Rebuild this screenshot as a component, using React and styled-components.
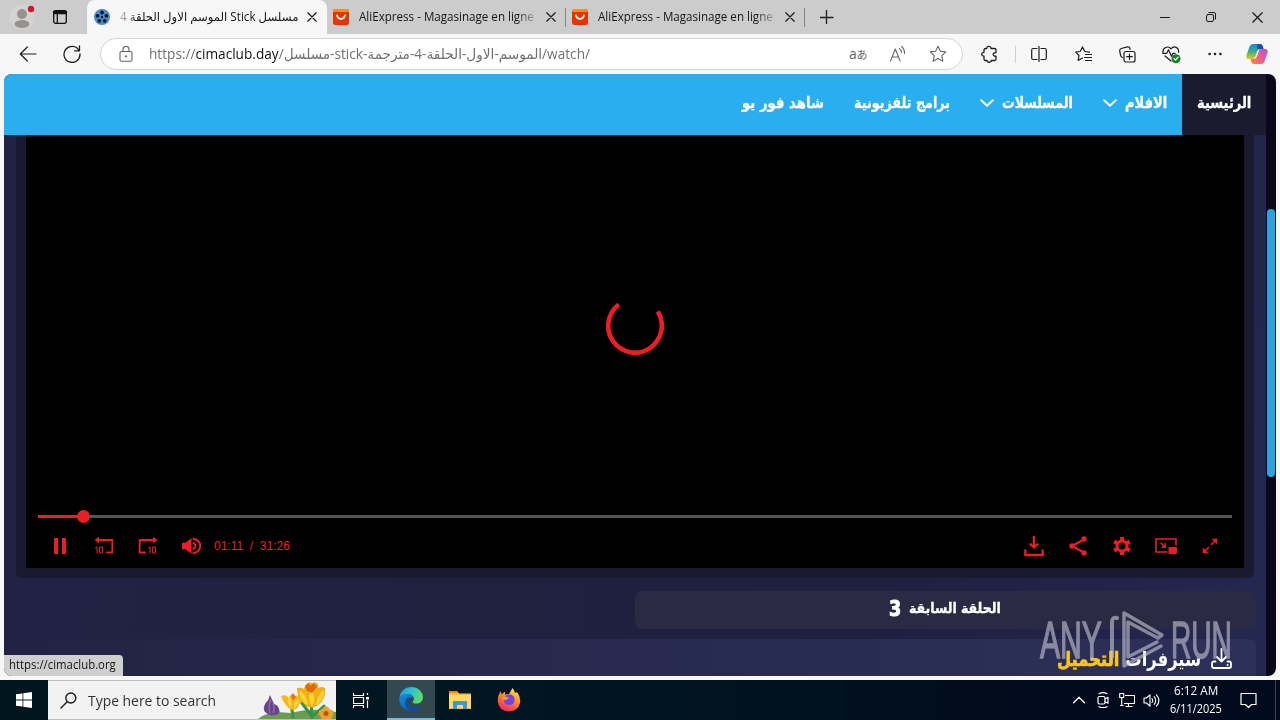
import React, { useLayoutEffect, useRef, useState } from 'react';
import styled, { createGlobalStyle } from 'styled-components';

const Global = createGlobalStyle`
  * { box-sizing: border-box; }
  body { margin: 0; overflow: hidden; font-family: "Open Sans", "DejaVu Sans", sans-serif; }
`;

const RED = '#ee1c25';

const Screen = styled.div`
  width: 1280px;
  height: 720px;
  display: flex;
  flex-direction: column;
  overflow: hidden;
  background: #f7f7f7;
  position: relative;
`;

const Slot = styled.span`
  display: block;
  flex: none;
  width: ${(p) => p.$w}px;
  white-space: nowrap;
  direction: ltr;
  text-align: left;
`;
const Run = styled.span`
  display: inline-block;
  white-space: pre;
  transform-origin: 0 50%;
`;

/* Text squeezed or stretched to a known width. */
function Fit({ w, rtl, className, children }) {
  const ref = useRef(null);
  const [k, setK] = useState(1);
  useLayoutEffect(() => {
    if (ref.current.offsetWidth) setK(w / ref.current.offsetWidth);
  }, [w]);
  return (
    <Slot $w={w} className={className}>
      <Run ref={ref} dir={rtl ? 'rtl' : 'ltr'} style={{ transform: `scaleX(${k})` }}>{children}</Run>
    </Slot>
  );
}

const Svg = styled.svg`
  display: block;
  flex: none;
  width: ${(p) => p.$w || 20}px;
  height: ${(p) => p.$h || p.$w || 20}px;
  fill: none;
  stroke: ${(p) => (p.$s === 0 ? 'none' : p.$c || '#1c1c1c')};
  stroke-width: ${(p) => p.$s || 1.2};
  stroke-linecap: round;
  stroke-linejoin: round;
`;
const Icon = ({ w = 20, h, c, s, children }) => (
  <Svg $w={w} $h={h} $c={c} $s={s} viewBox={`0 0 ${w} ${h || w}`}>{children}</Svg>
);

const Cell = styled.div`
  width: ${(p) => p.$w || 44}px;
  height: 100%;
  flex: none;
  display: flex;
  align-items: center;
  justify-content: center;
`;
const Spacer = styled.div`flex: 1;`;

/* ---------- tab strip ---------- */
const TabStrip = styled.div`
  height: 34px;
  flex: none;
  display: flex;
  align-items: stretch;
  background: #ccc;
`;
const Tab = styled.div`
  width: ${(p) => p.$w}px;
  display: flex;
  align-items: center;
  padding-left: ${(p) => p.$pl}px;
  font-size: 12px;
  color: #151515;
  background: ${(p) => (p.$active ? '#f7f7f7' : 'transparent')};
  border-radius: ${(p) => (p.$active ? '8px 8px 0 0' : '0')};
`;
const TabTitle = styled(Fit)`
  line-height: 20px;
  margin-left: 10px;
  mask-image: linear-gradient(to ${(p) => (p.rtl ? 'left' : 'right')}, #000 ${(p) => (p.rtl ? 90 : 90)}%, rgba(0,0,0,.25) 100%);
`;
const Divider = styled.i`
  width: 1px;
  height: ${(p) => p.$h}px;
  align-self: center;
  background: ${(p) => p.$c};
  flex: none;
`;
const CloseBox = styled.div`
  margin-left: ${(p) => p.$ml}px;
`;
const Close = ({ w = 10 }) => (
  <Icon w={w} s={1.25}><path d={`M.8.8 ${w - 0.8} ${w - 0.8}M${w - 0.8}.8.8 ${w - 0.8}`} /></Icon>
);

const Ali = () => (
  <Icon w={16} s={1.8} c="#fff">
    <rect width="16" height="16" rx="2.5" fill="#e63303" stroke="none" />
    <path d="M0 3V2.500Q0 0 2.500 0H13.500Q16 0 16 2.500V3Z" fill="#f88c1c" stroke="none" />
    <path d="M4 6.300C5 11 11 11 12 6.300" />
  </Icon>
);
const Reel = () => (
  <Icon w={16} s={0}>
    <circle cx="8" cy="8" r="8" fill="#4a8cc8" />
    <g fill="#0b1a30">
      <circle cx="8" cy="8" r="1.200" /><circle cx="8" cy="3.500" r="1.900" /><circle cx="3.600" cy="6.800" r="1.900" />
      <circle cx="12.400" cy="6.800" r="1.900" /><circle cx="5.300" cy="11.800" r="1.900" /><circle cx="10.700" cy="11.800" r="1.900" />
    </g>
  </Icon>
);

function Tabs() {
  return (
    <TabStrip>
      <Cell $w={44}>
        <Icon w={28} s={0}>
          <circle cx="14" cy="14" r="12.500" fill="#d5d3d1" />
          <circle cx="14" cy="11" r="5" fill="#96928f" />
          <ellipse cx="14" cy="21" rx="7.500" ry="4" fill="#96928f" />
          <circle cx="23" cy="6" r="3.200" fill="#d8142b" />
        </Icon>
      </Cell>
      <Cell $w={32}>
        <Icon w={14} s={1.3} c="#111"><rect x=".7" y=".7" width="12.600" height="12.600" rx="2" /><path d="M.7 1.500h12.600v2.200H.7zM4.300 4v9" fill="#111" /></Icon>
      </Cell>
      <Cell $w={11} />
      <Tab $w={240} $pl={7} $active>
        <Reel />
        <TabTitle w={178} rtl>{'مسلسل Stick الموسم الاول الحلقة 4'}</TabTitle>
        <CloseBox $ml={9}><Close /></CloseBox>
      </Tab>
      <Tab $w={238} $pl={6}>
        <Ali /><TabTitle w={175}>AliExpress - Magasinage en ligne</TabTitle>
        <CloseBox $ml={12}><Close /></CloseBox>
      </Tab>
      <Divider $h={19} $c="#858585" />
      <Tab $w={238} $pl={6}>
        <Ali /><TabTitle w={175}>AliExpress - Magasinage en ligne</TabTitle>
        <CloseBox $ml={12}><Close /></CloseBox>
      </Tab>
      <Divider $h={19} $c="#858585" />
      <Cell $w={43}><Icon w={14} s={1.3}><path d="M6.500 .5v13M0 7.500h13" /></Icon></Cell>
      <Spacer />
      <Cell $w={46}><Icon w={10} s={1}><path d="M0 5.500h10" /></Icon></Cell>
      <Cell $w={46}><Icon w={10} s={1}><rect x=".5" y="2.500" width="7" height="7" rx="1.500" /><path d="M2.800.5H8Q9.500.5 9.500 2v5.200" /></Icon></Cell>
      <Cell $w={46}><Close w={11} /></Cell>
    </TabStrip>
  );
}

/* ---------- toolbar ---------- */
const Toolbar = styled.div`
  height: 40px;
  flex: none;
  display: flex;
  align-items: center;
  padding-left: 6px;
`;
const Address = styled.div`
  width: 863px;
  height: 32px;
  margin-left: 7px;
  display: flex;
  align-items: center;
  border: 1px solid #cfd5da;
  border-radius: 16px;
  background: #fff;
  color: #717171;
  font-size: 14px;
  padding-left: 18px;
  b { font-weight: 400; color: #111; }
`;
const Url = styled(Fit)`margin-left: 16px; line-height: 24px;`;
const Glyph = styled.span`
  font: 14px "Open Sans", "Noto Sans CJK JP", sans-serif;
  color: #666;
  letter-spacing: -.5px;
  padding-bottom: 2px;
  small { font-size: 11px; }
`;

function Bar() {
  return (
    <Toolbar>
      <Cell><Icon w={18} s={1.2}><path d="M17 9H1.500M8.300 2 1.300 9l7 7" /></Icon></Cell>
      <Cell $w={43}><Icon w={18} s={1.3}><path d="M16 5.500A8 8 0 1 0 17 9M16.500 1v4.800h-4.800" /></Icon></Cell>
      <Address>
        <Icon w={14} h={16} c="#666" s={1.1}><rect x="1" y="5.500" width="12" height="9.700" rx="1.500" /><path d="M4 5.500V3.500a3 3 0 0 1 6 0v2" /><circle cx="7" cy="10.300" r=".5" fill="#666" /></Icon>
        <Url w={441}>{'https://'}<b>cimaclub.day</b>{'/مسلسل-stick-الموسم-الاول-الحلقة-4-مترجمة/watch/'}</Url>
        <Spacer />
        <Cell $w={40}><Glyph>a<small>あ</small></Glyph></Cell>
        <Cell $w={40}><Icon w={18} c="#666" s={1.1}><path d="M1.500 16 6.300 4l4.800 12M3.200 12h6.300M10.500 3.500q2 1.500 2 4M12.500 1.500q3.200 2.500 3 7" /></Icon></Cell>
        <Cell $w={40}><Icon w={18} c="#666" s={1.1}><path d="m9 1.200 2.400 5 5.400.7-4 3.800 1 5.500L9 13.600l-4.800 2.600 1-5.500-4-3.800 5.400-.7z" /></Icon></Cell>
        <Cell $w={4} />
      </Address>
      <Cell $w={52}><Icon w={18} s={1.3}><path d="M6.800 3.500C6.500 .6 11.300 .6 11 3.500h3.500q1.500 0 1.500 1.500v2.600c-3.700-.7-3.700 4.300 0 3.600V14q0 1.500-1.500 1.500H11.300c.3 2.300-4.600 2.300-4.300 0H5.500Q4 15.500 4 14v-2.800C1 11.200 1 7.300 4 7.300V5q0-1.500 1.500-1.500z" /></Icon></Cell>
      <Divider $h={17} $c="#cfcfcf" />
      <Cell $w={46}><Icon w={16}><path d="M8 .5v15M6 2.500H2.200Q.7 2.500.7 4v8q0 1.500 1.500 1.500H6M10 2.500h3.800q1.500 0 1.500 1.500v8q0 1.500-1.500 1.500H10" /></Icon></Cell>
      <Cell $w={43}><Icon w={17}><path d="M14.500 6.100 9.800 5.500 7.500 1 5.200 5.500.7 6.200l3.300 3.300-.9 5L7.500 12M10.500 8.500h6M9.500 11.500h7M10.500 14.500h6" /></Icon></Cell>
      <Cell><Icon w={17}><rect x="5" y="5.500" width="11" height="10.500" rx="2" /><path d="M10.500 8v5.500M7.700 10.700h5.600M3.500 11.500Q1.800 11 1.500 9.200L.7 4.800Q.6 3 2.200 2.500L8.500.8Q10.500.6 11 2.500v.8" /></Icon></Cell>
      <Cell><Icon w={19}><path d="M1 7.500C.5 3 6 0 9 3.800 12 0 17.500 2.500 16.500 7.500M.7 8.300h4l1.800-3.500 3 6.500 1.600-3h2M3 11l6 5" /><circle cx="14" cy="13.700" r="4.500" fill="#168028" stroke="none" /><path d="m12 13.700 1.500 1.500 2.600-3" stroke="#fff" /></Icon></Cell>
      <Cell><Icon w={14} h={4} s={0}><g fill="#1c1c1c"><circle cx="1.600" cy="2" r="1.300" /><circle cx="7" cy="2" r="1.300" /><circle cx="12.400" cy="2" r="1.300" /></g></Icon></Cell>
      <Cell $w={40}>
        <Icon w={22} s={0}>
          <defs>
            <linearGradient id="ca" x1="0" y1="0" x2="0" y2="1"><stop stopColor="#1688e0" /><stop offset=".5" stopColor="#36b27b" /><stop offset="1" stopColor="#f4c414" /></linearGradient>
            <linearGradient id="cb" x1="1" y1="0" x2="0" y2="1"><stop stopColor="#a952dc" /><stop offset=".5" stopColor="#ef5b90" /><stop offset="1" stopColor="#fb8b38" /></linearGradient>
          </defs>
          <path d="M7 1h7q2 0 2.700 2L17.500 6H14q-2 0-2.700 2L9 14.500Q8.500 16 7 16H3Q-.5 16 .6 12L3.500 3.500Q4.500 1 7 1z" fill="url(#ca)" />
          <path d="M11 1h3q2 0 2.700 2l.8 3H14q-1.500 0-2.300 1z" fill="#1b4bb5" />
          <path d="M15 21H8q-2 0-2.700-2L4.500 16H8q2 0 2.700-2L13 7.500Q13.500 6 15 6h4q3.500 0 2.400 4l-2.900 8.500Q17.500 21 15 21z" fill="url(#cb)" />
        </Icon>
      </Cell>
    </Toolbar>
  );
}

/* ---------- page ---------- */
const Frame = styled.div`
  height: 602px;
  margin: 0 4px 4px;
  flex: none;
  display: flex;
  border-radius: 8px;
  overflow: hidden;
  position: relative;
`;
const Site = styled.div`
  width: 1262px;
  display: flex;
  flex-direction: column;
  background: linear-gradient(100deg, #222247, #20203f 40%, #1f1f40 70%, #242750);
`;
const ScrollTrack = styled.div`
  width: 10px;
  padding: 135px 1px 0;
  background: #090718;
`;
const ScrollThumb = styled.div`
  height: 268px;
  border-radius: 4px;
  background: #29a3e2;
`;
const Nav = styled.nav`
  height: 61px;
  flex: none;
  display: flex;
  direction: rtl;
  background: #29aeef;
  color: #fff;
  font: bold 15.5px "DejaVu Sans", sans-serif;
  -webkit-text-stroke: .3px #fff;
`;
const NavItem = styled.div`
  display: flex;
  align-items: center;
  gap: 8px;
  padding: 0 15px 3px;
  background: ${(p) => (p.$active ? '#1b1b30' : 'transparent')};
`;
const Chevron = () => <Icon w={14} h={8} c="#fff" s={2}><path d="m1.200 1.200 5.800 5.600 5.800-5.600" /></Icon>;

const PlayerShell = styled.section`
  width: 1238px;
  height: 443px;
  margin-left: 12px;
  padding: 0 10px 10px;
  flex: none;
  background: #191a31;
  border-radius: 0 0 6px 6px;
`;
const Player = styled.div`
  height: 433px;
  padding: 0 12px;
  display: flex;
  flex-direction: column;
  background: #000;
`;
const Stage = styled.div`
  height: 374px;
  padding: 6px 2px 0 0;
  display: flex;
  align-items: center;
  justify-content: center;
`;
const Track = styled.div`
  height: 14px;
  display: flex;
  align-items: center;
  i { height: 3px; background: #555; flex: 1; }
  i:first-child { flex: none; width: 40px; background: ${RED}; }
  b { width: 13px; height: 13px; margin: 0 -1px; border-radius: 50%; background: ${RED}; }
`;
const Controls = styled.div`
  height: 45px;
  padding-top: 1px;
  display: flex;
  align-items: center;
`;
const Time = styled.div`color: ${RED}; font: 12px "Liberation Sans", sans-serif;`;

const BelowRow = styled.div`
  height: 38px;
  margin: 13px 10px 0 631px;
  flex: none;
  display: flex;
  align-items: center;
  direction: rtl;
  padding-right: 255px;
  gap: 8px;
  border-radius: 8px;
  background: #2a2a45;
  color: #fff;
  font: bold 14px "DejaVu Sans", sans-serif;
  -webkit-text-stroke: .4px #fff;
  b { font: 900 22px/34px "DejaVu Sans", sans-serif; padding-bottom: 2px; -webkit-text-stroke: 1px #fff; }
`;
const PrevLabel = styled(Fit)`padding-bottom: 4px;`;
const Downloads = styled.div`
  height: 37px;
  margin: 10px 10px 0 8px;
  flex: none;
  display: flex;
  align-items: flex-start;
  direction: rtl;
  padding: 6px 24px 0 0;
  border-radius: 8px 8px 0 0;
  background: linear-gradient(90deg, #222344, #2d3059);
  color: #fff;
  font: bold 20px/28px "DejaVu Sans", sans-serif;
`;
const Servers = styled(Fit)`
  margin-right: 10px;
  em { color: #fcc61a; font-style: normal; -webkit-text-stroke: .7px #fcc61a; }
`;
const DlIcon = styled.div`padding-top: 3px;`;

const StatusTip = styled.div`
  position: absolute;
  left: 0;
  bottom: 0;
  width: 119px;
  height: 21px;
  padding-left: 5px;
  background: #cfcfcf;
  border-radius: 0 4px 0 0;
  color: #151515;
  font-size: 12px;
  line-height: 20px;
`;
const Watermark = styled.div`
  position: absolute;
  left: 1036px;
  top: 535px;
  width: 192px;
  height: 64px;
  display: flex;
  align-items: center;
  color: #c4c4d0;
  opacity: .62;
  font: 51px/60px "Liberation Sans", sans-serif;
  -webkit-text-stroke: 1.4px #c4c4d0;
`;
const MarkLogo = styled.div`margin: 0 4px 0 7px;`;

function Page() {
  return (
    <Frame>
      <Site>
        <Nav>
          <NavItem $active><Fit w={54} rtl>الرئيسية</Fit></NavItem>
          <NavItem><Fit w={42} rtl>الافلام</Fit><Chevron /></NavItem>
          <NavItem><Fit w={71} rtl>المسلسلات</Fit><Chevron /></NavItem>
          <NavItem><Fit w={96} rtl>برامج تلفزيونية</Fit></NavItem>
          <NavItem><Fit w={82} rtl>شاهد فور يو</Fit></NavItem>
        </Nav>
        <PlayerShell>
          <Player>
            <Stage>
              <Icon w={60} c={RED} s={4.6}><path d="M14.800 9.500A26.800 26.800 0 1 0 53.700 16.500" strokeLinecap="butt" /></Icon>
            </Stage>
            <Track><i /><b /><i /></Track>
            <Controls>
              <Cell><Icon w={12} h={16} s={0}><path d="M0 0h4v16H0zM8 0h4v16H8z" fill={RED} /></Icon></Cell>
              <Cell><Icon w={20} c={RED} s={1.8}><path d="M4 4h14.300v12.500H13" strokeLinejoin="miter" /><path d="M.5 4 5 .8v6.400z" fill={RED} stroke="none" /><path d="M1.500 12 3 11v6M6 11h2.500v6H6z" strokeWidth="1" /></Icon></Cell>
              <Cell><Icon w={20} c={RED} s={1.8}><path d="M15 4H1.700v12.500H7" strokeLinejoin="miter" /><path d="M19.500 4 15 .8v6.400z" fill={RED} stroke="none" /><path d="m10.500 12 1.500-1v6M15 11h2.500v6H15z" strokeWidth="1" /></Icon></Cell>
              <Cell><Icon w={20} c={RED} s={1.9}><path d="M0 6.700h3.500L9.500 2v16l-6-4.700H0z" fill={RED} stroke="none" /><path d="M11.500 7q4 3 0 6M11.500 2.800c9 2 9 12.400 0 14.400" /></Icon></Cell>
              <Time><Fit w={76}>{'01:11  /  31:26'}</Fit></Time>
              <Spacer />
              <Cell><Icon w={20} h={22} c={RED} s={2.300}><path d="M10 1v11M5.800 8.500 10 12.500l4.200-4M1.300 14.500V20h17.400v-5.500" strokeLinejoin="miter" strokeLinecap="butt" /></Icon></Cell>
              <Cell><Icon w={18} h={20} c={RED} s={2}><path d="M15 3.500 3 10l12 6.500" /><g fill={RED} stroke="none"><circle cx="15" cy="3" r="2.700" /><circle cx="3" cy="10" r="2.700" /><circle cx="15" cy="17" r="2.700" /></g></Icon></Cell>
              <Cell><Icon w={20} c={RED} s={3}><circle cx="10" cy="10" r="5" /><path d="M10 1v3.500M10 15.500V19M2.200 5.500l3 1.750M14.800 12.750l3 1.750M2.200 14.500l3-1.750M14.800 7.250l3-1.750" strokeLinecap="butt" strokeWidth="4" /></Icon></Cell>
              <Cell><Icon w={22} h={18} c={RED} s={1.600}><path d="M21 8V2H1v13h11" strokeLinejoin="miter" /><path d="m6 6 4 4M10.300 6.800v3.400H7" /><rect x="13.500" y="10" width="8.500" height="7" rx="1" fill={RED} stroke="none" /></Icon></Cell>
              <Cell><Icon w={16} c={RED} s={1.600}><path d="m9.500 6.500 5-5M6.500 9.500l-5 5" /><path d="M9.500 .8h5.700V6.500zM.8 9.500v5.700H6.500z" fill={RED} stroke="none" /></Icon></Cell>
            </Controls>
          </Player>
        </PlayerShell>
        <BelowRow>
          <PrevLabel w={92} rtl>الحلقة السابقة</PrevLabel>
          <b><Fit w={12}>3</Fit></b>
        </BelowRow>
        <Downloads>
          <DlIcon><Icon w={21} h={22} c="#fff" s={1.800}><path d="M10.500 1v12M6 9l4.500 4.500L15 9M4.500 13.500H3q-2 0-2 2V18q0 2 2 2h15q2 0 2-2v-2.500q0-2-2-2h-1.500M16.500 17h.2" /></Icon></DlIcon>
          <Servers w={144} rtl>سيرفرات <em>التحميل</em></Servers>
        </Downloads>
      </Site>
      <ScrollTrack><ScrollThumb /></ScrollTrack>
      <StatusTip><Fit w={107}>https://cimaclub.org</Fit></StatusTip>
      <Watermark>
        <Fit w={62}>ANY</Fit>
        <MarkLogo>
          <Icon w={58} h={64} c="#c4c4d0" s={4}>
            <path d="M3 48V13Q3 8 8 9" />
            <path d="M15 15V57L52 37M15 41V4L53 26L49 29L19 13V48L48 33" strokeWidth="3.500" />
          </Icon>
        </MarkLogo>
        <Fit w={61}>RUN</Fit>
      </Watermark>
    </Frame>
  );
}

/* ---------- taskbar ---------- */
const Taskbar = styled.div`
  height: 40px;
  flex: none;
  display: flex;
  align-items: center;
  background: linear-gradient(90deg, #00161f, #001520 50%, #020a1d 85%);
`;
const Search = styled.div`
  width: 288px;
  height: 40px;
  display: flex;
  align-items: center;
  padding-left: 12px;
  background: #f2f2f2;
  border: 1px solid #bdbdbd;
  border-width: 1px 0;
  color: #333;
  font-size: 15px;
`;
const SearchHint = styled(Fit)`margin-left: 11px;`;
const TaskButton = styled(Cell)`
  background: ${(p) => (p.$on ? '#34484f' : 'transparent')};
  border-bottom: ${(p) => (p.$on ? '2px solid #76b9ed' : '0')};
`;
const Clock = styled.div`
  width: 66px;
  display: flex;
  flex-direction: column;
  align-items: center;
  color: #fff;
  font-size: 12px;
  line-height: 18px;
`;

const Crocus = () => (
  <Svg $w={82} $h={38} $s={0} viewBox="0 0 82 38">
    <path d="M4 38Q14 29 36 32 60 26 82 31V38z" fill="#6c9b52" />
    <path d="M37 22l2 14M57 18l1 19M60 34l10-9M56 33l-8-11" stroke="#339449" strokeWidth="3" />
    <path d="M16 14q-1 5-5 9-4 8 5 11 12 1 9-6-1-4-5-5z" fill="#64458a" />
    <path d="M17 18q-3 8-1 14M19 23q2 4 0 9" stroke="#9370b5" strokeWidth="1.200" />
    <path d="M27 15q5-2 8 2 2-6 6-2 4-1 9 0l-5 9q-3 7-9 4-5-3-9-13z" fill="#f4b81b" />
    <path d="M36 27q-3-8-1-11 4 5 1 11M40 28q0-9 5-10-1 7-5 10" fill="#ffda3e" />
    <path d="m37 15 2-3 3 4-3 4z" fill="#e37513" />
    <path d="M43 7q4-1 7 1 2-8 8-6 7-2 6 5 4-2 7 0 1 12-7 17-7 5-13 0-8-7-8-17z" fill="#f2ae13" />
    <path d="M45 9q8 5 9 15-8-3-9-15M57 8q6 8 1 18-5-9-1-18M70 9q-7 5-8 15 8-4 8-15" fill="#ffd535" />
    <path d="m51 5 4-3 1 3 4-3 3 4-5 6-5-2z" fill="#dd6a12" />
    <g fill="#eaa12d"><circle cx="72" cy="29" r="3.500" /><circle cx="68" cy="32" r="3.500" /><circle cx="76" cy="32" r="3.500" /><circle cx="70" cy="35" r="3.500" /><circle cx="75" cy="35" r="3.500" /></g>
    <circle cx="72" cy="32.500" r="2.500" fill="#b5560f" />
  </Svg>
);

function Tasks() {
  return (
    <Taskbar>
      <Cell $w={48}><Icon w={16} s={0}><path d="M0 2.300 6.500 1.400v6.200H0zM7.300 1.300 16 0v7.600H7.300zM0 8.400h6.500v6.200L0 13.700zM7.300 8.400H16V16l-8.700-1.300z" fill="#fff" /></Icon></Cell>
      <Search>
        <Icon w={17} s={1.400}><circle cx="10.800" cy="6" r="5" /><path d="M7.200 9.700 1 16" /></Icon>
        <SearchHint w={128}>Type here to search</SearchHint>
        <Spacer />
        <Crocus />
      </Search>
      <Cell $w={51}><Icon w={17} c="#fff" s={1.200}><path d="M.5 1v2.500h10V1M.5 16v-2.500h10V16M.5 5.500h10v6h-10zM14.500 1v2M14.500 8.500V16" strokeLinecap="butt" /><path d="M13 5h3v2.500h-3z" fill="#fff" stroke="none" /></Icon></Cell>
      <TaskButton $w={48} $on>
        <Icon w={24} s={0}>
          <defs>
            <linearGradient id="ea" x1="0" x2="1" y2=".4"><stop stopColor="#2596dd" /><stop offset=".55" stopColor="#2cc3d2" /><stop offset="1" stopColor="#5bdc68" /></linearGradient>
            <linearGradient id="eb" x1="0" y1="0" x2=".7" y2="1"><stop stopColor="#1b8fdf" /><stop offset="1" stopColor="#0b55a8" /></linearGradient>
          </defs>
          <path d="M.5 10C2 3 7 0 12.500 0 19 0 24 5 24 10.300 24 15 20 17 16.500 16.500c-3 0-3.500-1.500-2.300-2.700C16 12 14.500 7 8.500 7 4 7 .8 9.500.5 10z" fill="url(#ea)" />
          <path d="M.3 11C1.500 6 11.500 5 14 10.500c-3-1-6 1-5.500 5 .5 4.500 6 6.500 12.500 3.500 1-.4 1.500.3.8 1C19 23.500 15.500 24 12 24 4.500 24-.5 17.500.3 11z" fill="url(#eb)" />
          <path d="M8.500 10.500C4.500 14.500 6 22 12.500 24c3.500 0 7-1 9.300-4 .7-.7.200-1.400-.8-1-6.500 3-12 1-12.500-3.500-.2-2 .5-3.500 2-4.500z" fill="#114c99" />
        </Icon>
      </TaskButton>
      <TaskButton $w={49}>
        <Icon w={22} h={20} s={0}>
          <path d="M0 1h8l2 2.500h12V19H0z" fill="#f5c344" /><path d="M0 1h8l1.500 2H0z" fill="#e18b16" />
          <path d="M0 5h22v13H0z" fill="#ffd766" /><path d="M4 19v-8h14v8h-4v-4H8v4z" fill="#3c97d3" />
        </Icon>
      </TaskButton>
      <TaskButton $w={49}>
        <Icon w={24} s={0}>
          <defs><linearGradient id="ff" x1=".8" x2=".3" y2="1"><stop stopColor="#fff04a" /><stop offset=".4" stopColor="#ff9823" /><stop offset="1" stopColor="#f32361" /></linearGradient></defs>
          <path d="M15.500 0q2 2 2.500 5l2-1q4 5 3 11-2 8-11 8.500Q1.500 23 .7 13 .7 7 4 3l.5 3.500L8 3.500v3l4-.5z" fill="url(#ff)" />
          <path d="M8 8q6-4 9 1 2 8-5 8-5 0-5-5z" fill="#7542e5" /><path d="M5 10q3-3 7 0l-3 2q-3 0-4-2z" fill="#ff9d22" />
        </Icon>
      </TaskButton>
      <Spacer />
      <Cell $w={24}><Icon w={14} h={8} c="#fff" s={1.300}><path d="m1.500 6.700 5.500-5.400 5.500 5.400" /></Icon></Cell>
      <Cell $w={24}><Icon w={16} c="#fff" s={1.200}><rect x="3" y="4.500" width="7" height="7.500" rx="1.500" /><path d="m10 7 3-1.700v6L10 9.800M4 1.700q4-2 8 0M4 14.700q4 2 8 0" /></Icon></Cell>
      <Cell $w={24}><Icon w={16} c="#fff" s={1.100}><path d="M6 3.500h9.500v8H5M9.500 11.500v3M6.500 14.500h7M.7 1.500h4v4h-4zM2.700 5.500v8M1 13.500h3.500" strokeLinecap="butt" /></Icon></Cell>
      <Cell $w={24}><Icon w={17} c="#fff" s={1.100}><path d="M1 6h2.500L7 2.800v11.400L3.500 11H1zM9 6.500q1.500 2 0 4M11.200 4.700q3 3.800 0 7.600M13.400 2.800q5 5.700 0 11.400" /></Icon></Cell>
      <Clock><Fit w={44}>6:12 AM</Fit><Fit w={52}>6/11/2025</Fit></Clock>
      <Cell $w={38}><Icon w={17} c="#fff" s={1.200}><path d="M1 1.500h15v11h-4.500L8.500 15.500 5.500 12.500H1z" /></Icon></Cell>
      <Cell $w={8} />
      <Divider $h={40} $c="#3a4352" />
      <Cell $w={4} />
    </Taskbar>
  );
}

export default function App() {
  return (
    <Screen>
      <Global />
      <Tabs />
      <Bar />
      <Page />
      <Tasks />
    </Screen>
  );
}
